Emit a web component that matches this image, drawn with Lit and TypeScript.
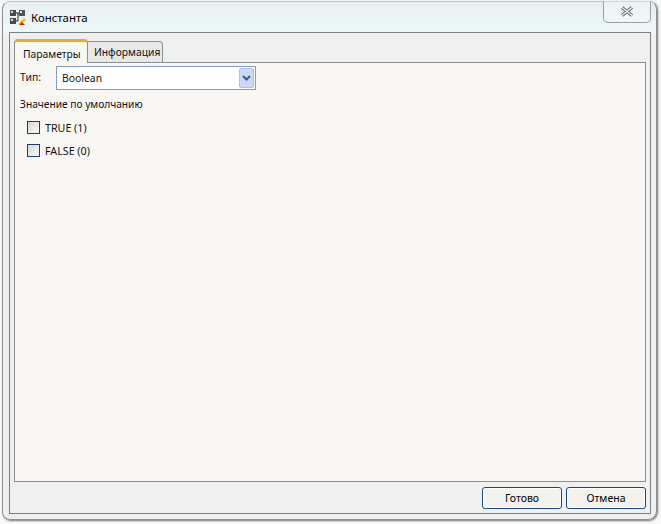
import { LitElement, html, css } from "lit";
import { customElement } from "lit/decorators.js";

@customElement("app-root")
export class AppRoot extends LitElement {
  static styles = css`
    :host { display: block; width: 661px; height: 524px; background: #f4f6f6; font-family: "Noto Sans", Tahoma, "DejaVu Sans", sans-serif; overflow: hidden; }
    * { box-sizing: border-box; }
    .page { width: 661px; height: 524px; padding: 1px 4px 4px 2px; background: #f7f8f8; }
    .window { position: relative; width: 655px; height: 519px; border: 1px solid #8d8d8d; border-top-color: #c4c8c8; border-radius: 8px 8px 9px 8px; box-shadow: 1px 1px 2px #777; background: linear-gradient(#e6f0f3 0, #eef7f7 30px, #efefef 34px); padding: 0 5px 5px 6px; display: flex; flex-direction: column; }
    .title { height: 30px; flex: none; display: flex; align-items: center; gap: 5px; padding: 0 0 0 1px; color: #000; }
    .title svg { flex: none; margin-top: 1px; }
    .title span { font-size: 11.4px; margin-top: 1px; }
    .close { position: absolute; top: -1px; right: 5px; width: 48px; height: 22px; border: 1px solid #9a9fa3; border-top: none; border-radius: 0 0 5px 5px; display: flex; align-items: center; justify-content: center; background: rgba(255,255,255,.25); }
    .body { flex: 1; border: 1px solid #7b7f80; background: #f0f0f0; padding: 5px 4px 0 4px; display: flex; flex-direction: column; }
    .tabs { display: flex; height: 24px; flex: none; align-items: flex-end; position: relative; z-index: 1; }
    .tab { font-size: 10.3px; line-height: 14px; color: #111; }
    .tab.active { width: 74px; height: 24px; margin-bottom: -1px; background: #f9f7f3; border: 1px solid #8b9192; border-top: 3px solid #f0a828; border-bottom: none; border-radius: 4px 4px 0 0; padding: 5px 0 0 8px; }
    .tab.other { width: 75px; height: 21px; background: #e8e8e6; border: 1px solid #8b9192; border-bottom: none; border-left: none; border-radius: 0 4px 0 0; padding: 3px 0 0 6px; }
    .panel { height: 420px; flex: none; border: 1px solid #8a9091; background: #f9f7f3; padding: 0 0 0 5px; }
    .row { display: flex; align-items: center; height: 24px; margin-top: 3px; font-size: 10.4px; color: #111; }
    .row label { width: 36px; margin-top: -2px; }
    .select { width: 200px; height: 24px; background: #fff; border: 1px solid #7f9dc5; display: flex; align-items: center; justify-content: space-between; padding: 1px 1px 1px 5px; }
    .arrow { width: 15px; height: 20px; background: #c9daf4; border: 1px solid #aac0e4; border-radius: 2px; display: flex; align-items: center; justify-content: center; }
    .legend { font-size: 10.2px; color: #111; margin-top: 7px; height: 14px; line-height: 14px; }
    .check { display: flex; align-items: center; gap: 5px; height: 23px; padding-left: 7px; font-size: 10.7px; color: #111; }
    .first { margin-top: 5px; }
    .box { width: 13px; height: 13px; border: 1px solid #1c3f6e; background: linear-gradient(135deg, #d8d8d6, #f8f8f6); }
    .footer { flex: 1; display: flex; justify-content: flex-end; align-items: flex-start; gap: 4px; padding: 5px 0 0 0; }
    button { width: 80px; height: 22px; padding: 0; font: inherit; font-size: 10.5px; color: #000; background: #f4f2ed; border: 1px solid #174a7c; border-radius: 3px; box-shadow: inset 0 0 0 1px #fff; }
  `;

  render() {
    return html`
      <div class="page">
        <div class="window">
          <div class="title">
            <svg width="16" height="16" viewBox="0 0 16 16">
              <path d="M4 3h8M4 11h4M8 3v8" stroke="#222" stroke-width="1" fill="none"/>
              <rect x="0" y="0" width="6" height="6" fill="#4a4a4a"/>
              <rect x="1" y="1" width="2" height="2" fill="#ddd"/>
              <rect x="0" y="8" width="6" height="6" fill="#4a4a4a"/>
              <rect x="1" y="9" width="2" height="2" fill="#ddd"/>
              <rect x="9" y="0" width="6" height="6" fill="#555"/>
              <rect x="10" y="1" width="2" height="2" fill="#ddd"/>
              <path d="M8 14l6-6 2 2-5 5z" fill="#f2c01e"/>
              <path d="M9 15l3-3 3 3z" fill="#d02a10"/>
            </svg>
            <span>Константа</span>
          </div>
          <div class="close">
            <svg width="14" height="11" viewBox="0 0 14 11">
              <path d="M2 1.5l10 8M12 1.5l-10 8" stroke="#5b6470" stroke-width="3.4" fill="none"/>
              <path d="M2 1.5l10 8M12 1.5l-10 8" stroke="#f2f4f6" stroke-width="1.4" fill="none"/>
            </svg>
          </div>
          <div class="body">
            <div class="tabs">
              <div class="tab active">Параметры</div>
              <div class="tab other">Информация</div>
            </div>
            <div class="panel">
              <div class="row">
                <label>Тип:</label>
                <div class="select">
                  <span>Boolean</span>
                  <div class="arrow">
                    <svg width="9" height="6" viewBox="0 0 9 6"><path d="M1 1l3.5 3.5L8 1" stroke="#3d5a8a" stroke-width="2" fill="none"/></svg>
                  </div>
                </div>
              </div>
              <div class="legend">Значение по умолчанию</div>
              <div class="check first"><div class="box"></div>TRUE (1)</div>
              <div class="check"><div class="box"></div>FALSE (0)</div>
            </div>
            <div class="footer">
              <button>Готово</button>
              <button>Отмена</button>
            </div>
          </div>
        </div>
      </div>
    `;
  }
}
